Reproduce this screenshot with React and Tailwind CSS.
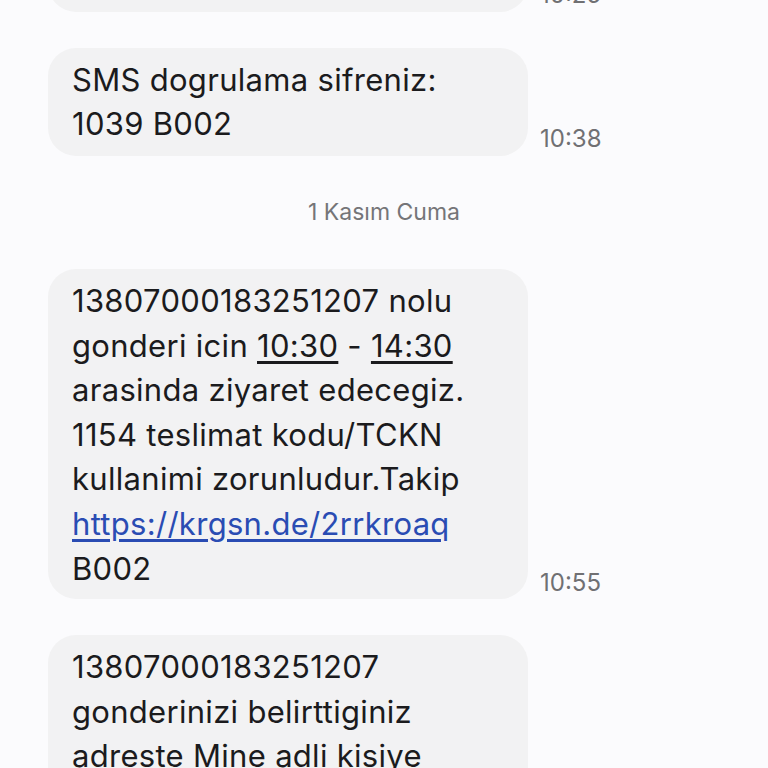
export default function App() {
  return (
    <div
      className="h-[768px] w-[768px] overflow-hidden bg-[#fbfbfd] text-[#1b1b1d]"
      style={{ fontFamily: 'Inter, Roboto, "Noto Sans", sans-serif' }}
    >
      <div className="-mt-[96px] flex flex-col pl-12">
        {/* previous message (cut off) */}
        <div className="flex items-end gap-3">
          <div className="w-[480px] rounded-[28px] bg-[#f2f2f3] px-6 py-[10px] text-[31px] leading-[44px]">
            <div>&nbsp;</div>
            <div>&nbsp;</div>
          </div>
          <div className="mb-[3px] text-[24px] leading-[28px] text-[#707073]">10:25</div>
        </div>

        <div className="mt-9 flex items-end gap-3">
          <div className="w-[480px] rounded-[28px] bg-[#f2f2f3] px-6 py-[10px] text-[31px] leading-[44px] tracking-[0.3px]">
            SMS dogrulama sifreniz:
            <br />
            1039 B002
          </div>
          <div className="mb-[3px] text-[24px] leading-[28px] text-[#707073]">10:38</div>
        </div>

        <div className="-ml-12 pb-[43px] pt-[42px] text-center text-[23px] leading-[28px] text-[#757578]">
          1 Kasım Cuma
        </div>

        <div className="flex items-end gap-3">
          <div className="w-[480px] rounded-[28px] bg-[#f2f2f3] px-6 pb-2 pt-[10px] text-[31px] leading-[44.6px] tracking-[0.3px]">
            13807000183251207 nolu
            <br />
            gonderi icin <span className="underline underline-offset-4">10:30</span> -{" "}
            <span className="underline underline-offset-4">14:30</span>
            <br />
            arasinda ziyaret edecegiz.
            <br />
            1154 teslimat kodu/TCKN
            <br />
            kullanimi zorunludur.Takip
            <br />
            <span className="text-[#2a4cb3] underline underline-offset-4">https://krgsn.de/2rrkroaq</span>
            <br />
            B002
          </div>
          <div className="mb-[2px] text-[24px] leading-[28px] text-[#707073]">10:55</div>
        </div>

        <div className="mt-9 flex items-end gap-3">
          <div className="w-[480px] rounded-[28px] bg-[#f2f2f3] px-6 pb-2 pt-[10px] text-[31px] leading-[44.6px] tracking-[0.3px]">
            13807000183251207
            <br />
            gonderinizi belirttiginiz
            <br />
            adreste Mine adli kisiye
            <br />
            teslim edilmistir.
            <br />
            B002
          </div>
        </div>
      </div>
    </div>
  );
}
